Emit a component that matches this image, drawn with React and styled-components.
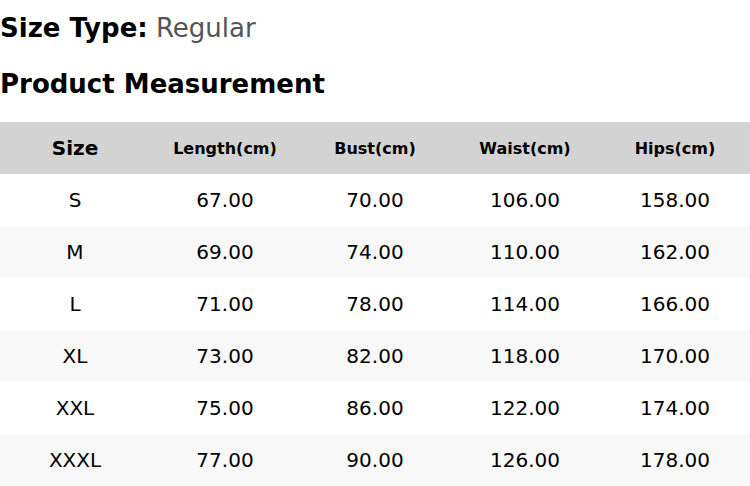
import React from "react";
import styled, { createGlobalStyle } from "styled-components";

const GlobalStyle = createGlobalStyle`
  body {
    margin: 0;
    background: #ffffff;
    font-family: "DejaVu Sans", "Liberation Sans", sans-serif;
    color: #000;
  }
`;

const Page = styled.div`
  padding-top: 13px;
  width: 750px;
`;

const SizeType = styled.div`
  font-size: 26px;
  line-height: 30px;
  margin-bottom: 26px;
`;

const Label = styled.span`
  font-weight: bold;
`;

const Value = styled.span`
  color: #555555;
`;

const Heading = styled.h2`
  margin: 0 0 23px;
  font-size: 26px;
  line-height: 30px;
  font-weight: bold;
`;

const Table = styled.table`
  width: 100%;
  border-collapse: collapse;
  table-layout: fixed;
`;

const HeadRow = styled.tr`
  background: #d3d3d3;
  height: 52px;
`;

const HeadCell = styled.th`
  padding: 0;
  text-align: center;
  font-weight: bold;
  font-size: ${(p) => (p.$big ? "20px" : "16px")};
`;

const Row = styled.tr`
  height: 52px;
  background: ${(p) => (p.$striped ? "#f8f8f8" : "#ffffff")};
`;

const Cell = styled.td`
  padding: 0;
  text-align: center;
  font-size: 20px;
`;

const columns = ["Size", "Length(cm)", "Bust(cm)", "Waist(cm)", "Hips(cm)"];

const rows = [
  ["S", "67.00", "70.00", "106.00", "158.00"],
  ["M", "69.00", "74.00", "110.00", "162.00"],
  ["L", "71.00", "78.00", "114.00", "166.00"],
  ["XL", "73.00", "82.00", "118.00", "170.00"],
  ["XXL", "75.00", "86.00", "122.00", "174.00"],
  ["XXXL", "77.00", "90.00", "126.00", "178.00"],
];

const App = () => (
  <Page>
    <GlobalStyle />
    <SizeType>
      <Label>Size Type:</Label> <Value>Regular</Value>
    </SizeType>
    <Heading>Product Measurement</Heading>
    <Table>
      <thead>
        <HeadRow>
          {columns.map((c, i) => (
            <HeadCell key={c} $big={i === 0}>
              {c}
            </HeadCell>
          ))}
        </HeadRow>
      </thead>
      <tbody>
        {rows.map((r, i) => (
          <Row key={r[0]} $striped={i % 2 === 1}>
            {r.map((v, j) => (
              <Cell key={j}>{v}</Cell>
            ))}
          </Row>
        ))}
      </tbody>
    </Table>
  </Page>
);

export default App;
